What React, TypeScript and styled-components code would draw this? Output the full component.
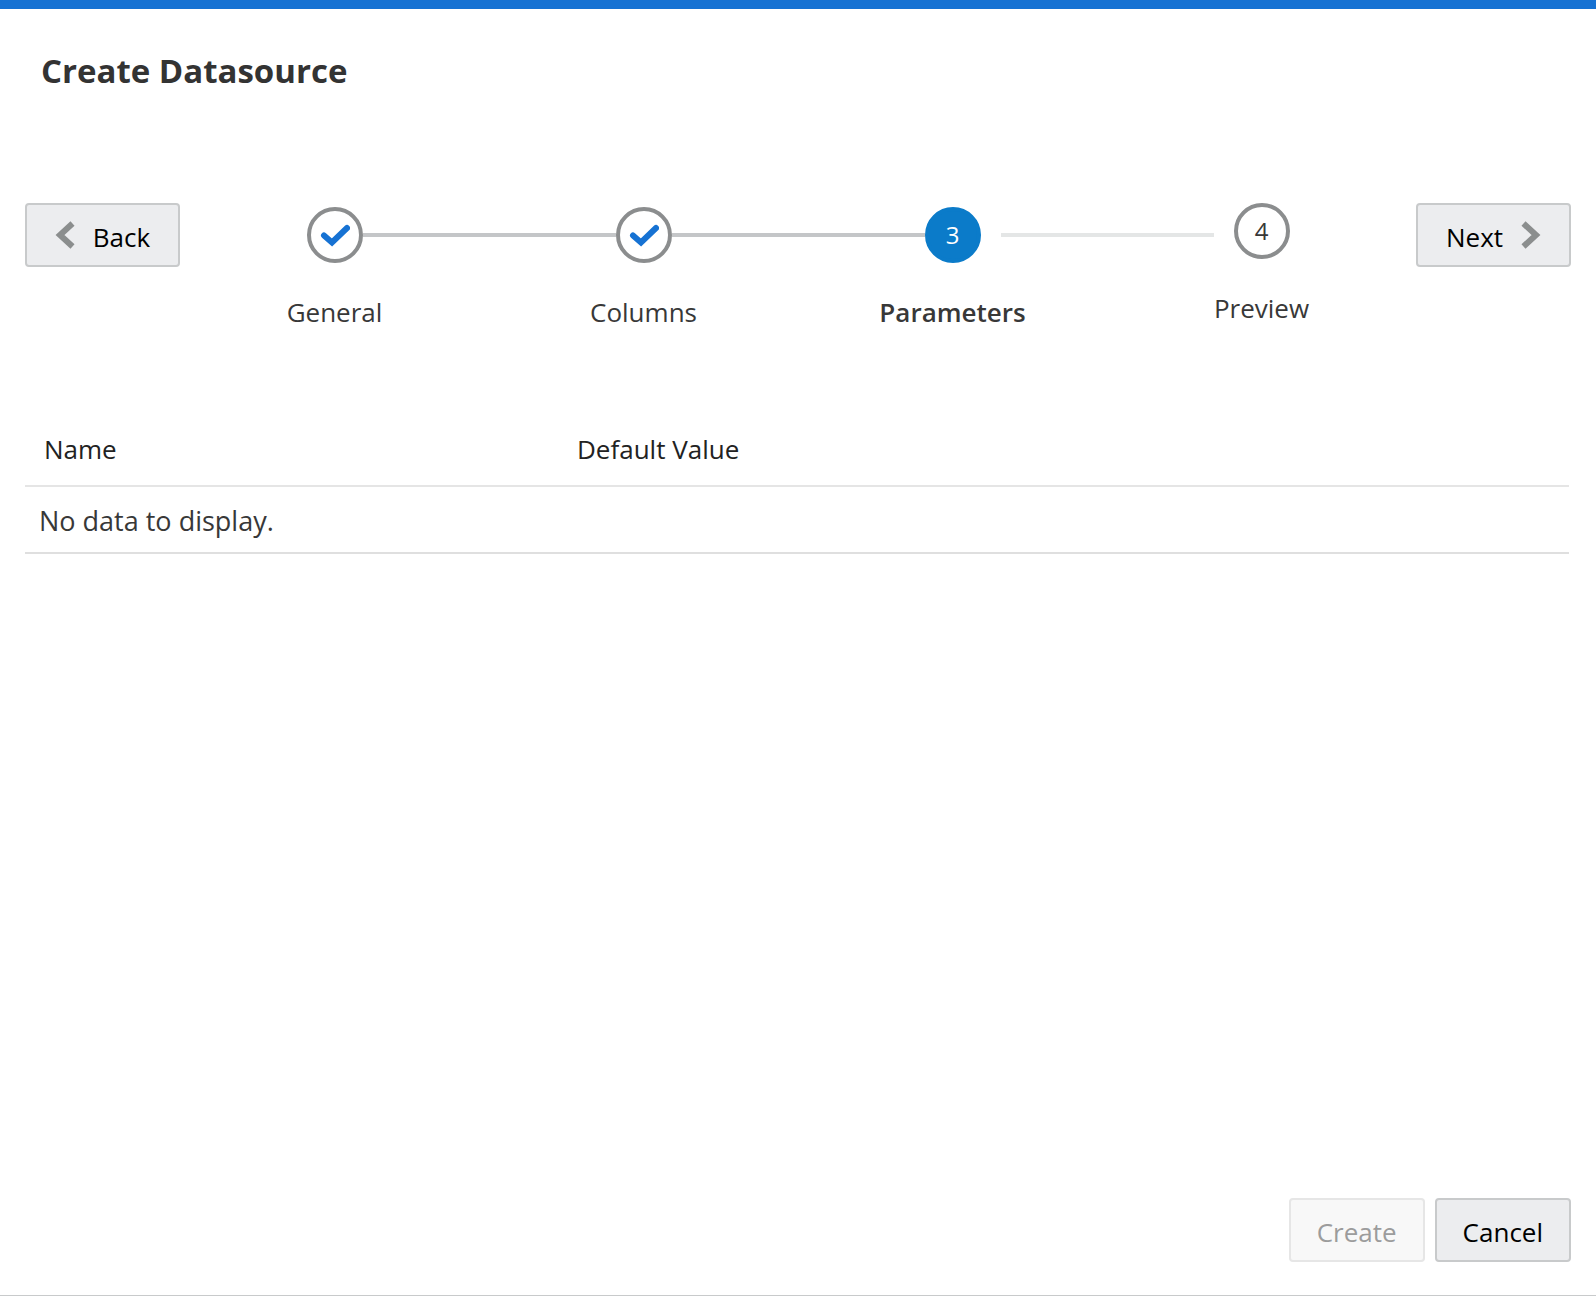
import React from "react";
import styled, { createGlobalStyle, css } from "styled-components";

const GlobalStyle = createGlobalStyle`
  *, *::before, *::after { box-sizing: border-box; }
  body {
    margin: 0;
    background: #fff;
    color: #383838;
    font: 400 26px/36px "Segoe UI", "Open Sans", "Noto Sans", sans-serif;
  }
`;

const Dialog = styled.section`
  display: flex;
  flex-direction: column;
  min-height: 100vh;
  border-top: 9px solid #1672d3;
  border-bottom: 1px solid #c8cacb;
`;

const Title = styled.h1`
  margin: 0;
  padding: 38px 41px 0;
  font-size: 33px;
  line-height: 48px;
  font-weight: 700;
  color: #333;
`;

const Wizard = styled.nav`
  display: flex;
  align-items: flex-start;
  margin-top: 108px;
  padding: 0 25px;
`;

const Button = styled.button`
  display: flex;
  align-items: center;
  justify-content: center;
  gap: 18px;
  height: 64px;
  padding: 0 26px;
  border: 2px solid #c8cacb;
  border-radius: 4px;
  background: #ecedef;
  color: #000;
  font: inherit;
  cursor: pointer;

  &:disabled {
    border-color: #e6e6e6;
    background: #f8f8f8;
    color: #9c9c9c;
    cursor: default;
  }
`;

const ButtonText = styled.span`
  padding-top: 3px;
`;

const NavButton = styled(Button)`
  flex: 0 0 155px;
`;

const Steps = styled.ol`
  display: flex;
  flex: 1;
  margin: 0;
  padding: 0;
  list-style: none;
`;

type State = "done" | "current" | "upcoming";

const Step = styled.li<{ $state: State }>`
  flex: 1 1 0;
  min-width: 0;
  padding-top: ${(p) => (p.$state === "upcoming" ? 0 : 4)}px;
  text-align: center;
`;

const Track = styled.div`
  display: grid;
  grid-template-columns: 1fr 56px 1fr;
  height: 56px;
`;

const Connector = styled.span<{ $kind: "none" | "solid" | "ahead"; $raised?: boolean }>`
  height: 4px;
  margin-top: ${(p) => (p.$raised ? 30 : 26)}px;
  ${(p) => p.$kind === "solid" && css`background: #c4c6c8;`}
  ${(p) =>
    p.$kind === "ahead" &&
    css`
      background: #e4e6e6;
      &:first-child { margin-right: 20px; }
      &:last-child { margin-left: 20px; }
    `}
`;

const Circle = styled.span<{ $state: State }>`
  display: flex;
  align-items: center;
  justify-content: center;
  height: 56px;
  border: 4px solid ${(p) => (p.$state === "current" ? "#0b7bc9" : "#8b8d8e")};
  border-radius: 50%;
  background: ${(p) => (p.$state === "current" ? "#0b7bc9" : "#fff")};
  color: ${(p) => (p.$state === "current" ? "#fff" : "#383838")};
  font-size: 24px;
`;

const StepLabel = styled.span<{ $state: State }>`
  display: block;
  margin-top: 31px;
  font-weight: ${(p) => (p.$state === "current" ? 600 : 400)};
`;

const Table = styled.table`
  width: calc(100% - 52px);
  margin: 82px 27px 0 25px;
  border-collapse: separate;
  border-spacing: 0;
  table-layout: fixed;
`;

const HeadCell = styled.th`
  height: 75px;
  padding: 0 19px;
  border-bottom: 2px solid #e5e5e5;
  color: #222;
  font-weight: 400;
  text-align: left;

  &:first-child { width: 533px; }
`;

const EmptyCell = styled.td`
  height: 67px;
  padding: 3px 14px 0;
  border-bottom: 2px solid #dfdfdf;
  font-size: 27px;
`;

const Footer = styled.footer`
  display: flex;
  justify-content: flex-end;
  gap: 10px;
  margin-top: auto;
  padding: 0 25px 33px;
`;

const Chevron = ({ flip = false }: { flip?: boolean }) => (
  <svg width="20" height="28" viewBox="0 0 20 28" aria-hidden="true">
    <path
      d={flip ? "M2.5 2.5 15 14 2.5 25.5" : "M17.5 2.5 5 14 17.5 25.5"}
      fill="none"
      stroke="#8b8e8e"
      strokeWidth="6"
    />
  </svg>
);

const Check = () => (
  <svg width="30" height="24" viewBox="0 0 30 24" aria-label="Completed" role="img">
    <path d="M4 12.5 12 19.5 27 5" fill="none" stroke="#1672d3" strokeWidth="6" strokeLinecap="round" />
  </svg>
);

const steps: { label: string; state: State }[] = [
  { label: "General", state: "done" },
  { label: "Columns", state: "done" },
  { label: "Parameters", state: "current" },
  { label: "Preview", state: "upcoming" },
];

export default function App() {
  return (
    <>
      <GlobalStyle />
      <Dialog aria-labelledby="dialog-title">
        <Title id="dialog-title">Create Datasource</Title>
        <Wizard aria-label="Wizard progress">
          <NavButton type="button">
            <Chevron />
            <ButtonText>Back</ButtonText>
          </NavButton>
          <Steps>
            {steps.map(({ label, state }, i) => (
              <Step key={label} $state={state} aria-current={state === "current" ? "step" : undefined}>
                <Track>
                  <Connector
                    $kind={i === 0 ? "none" : state === "upcoming" ? "ahead" : "solid"}
                    $raised={state === "upcoming"}
                  />
                  <Circle $state={state}>{state === "done" ? <Check /> : i + 1}</Circle>
                  <Connector $kind={i === steps.length - 1 ? "none" : state === "current" ? "ahead" : "solid"} />
                </Track>
                <StepLabel $state={state}>{label}</StepLabel>
              </Step>
            ))}
          </Steps>
          <NavButton type="button">
            <ButtonText>Next</ButtonText>
            <Chevron flip />
          </NavButton>
        </Wizard>
        <Table>
          <thead>
            <tr>
              <HeadCell scope="col">Name</HeadCell>
              <HeadCell scope="col">Default Value</HeadCell>
            </tr>
          </thead>
          <tbody>
            <tr>
              <EmptyCell colSpan={2}>No data to display.</EmptyCell>
            </tr>
          </tbody>
        </Table>
        <Footer>
          <Button type="button" disabled>
            <ButtonText>Create</ButtonText>
          </Button>
          <Button type="button">
            <ButtonText>Cancel</ButtonText>
          </Button>
        </Footer>
      </Dialog>
    </>
  );
}
